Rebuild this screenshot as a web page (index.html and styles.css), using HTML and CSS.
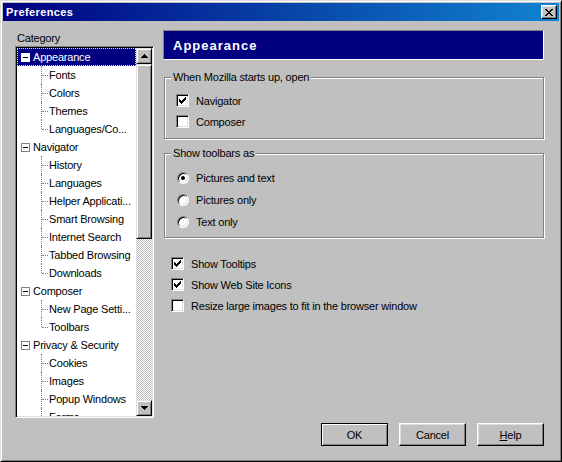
FILE: index.html
```html
<!DOCTYPE html>
<html lang="en">
<head>
	<meta charset="UTF-8">
	<title>Preferences</title>
	<link rel="stylesheet" href="styles.css">
</head>
<body>
	<div class="window">
		<div class="titlebar">
			<span class="title">Preferences</span>
			<button class="close" type="button">
				<svg width="8" height="7" viewBox="0 0 8 7"><path d="M0 0h2v1H0z M6 0h2v1H6z M1 1h2v1H1z M5 1h2v1H5z M2 2h4v1H2z M3 3h2v1H3z M2 4h4v1H2z M1 5h2v1H1z M5 5h2v1H5z M0 6h2v1H0z M6 6h2v1H6z" fill="#000"/></svg>
			</button>
		</div>
		<div class="content">
			<div class="cols">
				<div class="sidebar">
					<div class="cat-label">Category</div>
					<div class="tree">
						<ul class="tree-list">
							<li class="row node selected"><span class="twisty"></span>Appearance</li>
							<li class="row child">Fonts</li>
							<li class="row child">Colors</li>
							<li class="row child">Themes</li>
							<li class="row child last">Languages/Co...</li>
							<li class="row node"><span class="twisty"></span>Navigator</li>
							<li class="row child">History</li>
							<li class="row child">Languages</li>
							<li class="row child">Helper Applicati...</li>
							<li class="row child">Smart Browsing</li>
							<li class="row child">Internet Search</li>
							<li class="row child">Tabbed Browsing</li>
							<li class="row child last">Downloads</li>
							<li class="row node"><span class="twisty"></span>Composer</li>
							<li class="row child">New Page Setti...</li>
							<li class="row child last">Toolbars</li>
							<li class="row node"><span class="twisty"></span>Privacy &amp; Security</li>
							<li class="row child">Cookies</li>
							<li class="row child">Images</li>
							<li class="row child">Popup Windows</li>
							<li class="row child">Forms</li>
						</ul>
						<div class="scrollbar">
							<div class="sb-btn">
								<svg width="7" height="4" viewBox="0 0 7 4"><path d="M3 0h1v1h1v1h1v1h1v1H0V3h1V2h1V1h1z" fill="#000"/></svg>
							</div>
							<div class="sb-track">
								<div class="sb-thumb"></div>
							</div>
							<div class="sb-btn">
								<svg width="7" height="4" viewBox="0 0 7 4"><path d="M0 0h7v1H6v1H5v1H4v1H3V3H2V2H1V1H0z" fill="#000"/></svg>
							</div>
						</div>
					</div>
				</div>
				<div class="panel">
					<div class="panel-header">Appearance</div>

					<fieldset class="group group-start">
						<legend class="group-title">When Mozilla starts up, open</legend>
						<div class="check-row"><span class="checkbox checked"></span>Navigator</div>
						<div class="check-row"><span class="checkbox"></span>Composer</div>
					</fieldset>

					<fieldset class="group group-toolbars">
						<legend class="group-title">Show toolbars as</legend>
						<div class="radio-row"><span class="radio checked"></span>Pictures and text</div>
						<div class="radio-row"><span class="radio"></span>Pictures only</div>
						<div class="radio-row"><span class="radio"></span>Text only</div>
					</fieldset>

					<div class="options">
						<div class="check-row"><span class="checkbox checked"></span>Show Tooltips</div>
						<div class="check-row"><span class="checkbox checked"></span>Show Web Site Icons</div>
						<div class="check-row"><span class="checkbox"></span>Resize large images to fit in the browser window</div>
					</div>
				</div>
			</div>
			<div class="buttons">
				<button class="btn btn-default" type="button">OK</button>
				<button class="btn" type="button">Cancel</button>
				<button class="btn" type="button"><u>H</u>elp</button>
			</div>
		</div>
	</div>
</body>
</html>
```

FILE: styles.css
```css
body{
	margin: 0;
	background: #c0c0c0;
	font: 11px "Liberation Sans", Arial, sans-serif;
	letter-spacing: -0.2px;
	color: #000;
}
button{
	font: inherit;
	letter-spacing: inherit;
	color: #000;
}
.window{
	width: 562px;
	height: 462px;
	box-sizing: border-box;
	border: 1px solid;
	border-color: #dfdfdf #000 #000 #dfdfdf;
	box-shadow: inset 1px 1px #fff, inset -1px -1px #808080;
	padding: 2px;
	display: flex;
	flex-direction: column;
	background: #c0c0c0;
}

/* title bar */
.titlebar{
	height: 18px;
	display: flex;
	align-items: center;
	justify-content: space-between;
	padding: 0 2px 0 3px;
	background: linear-gradient(to right, #000080, #1084d0);
	color: #fff;
}
.title{
	font-weight: bold;
	letter-spacing: 0.4px;
}
.close{
	width: 16px;
	height: 14px;
	padding: 0;
	box-sizing: border-box;
	border: 1px solid;
	border-color: #fff #000 #000 #fff;
	box-shadow: inset -1px -1px #808080, inset 1px 1px #dfdfdf;
	background: #c0c0c0;
	display: flex;
	align-items: center;
	justify-content: center;
}

.content{
	flex: 1;
	padding: 9px 15px 0 12px;
	display: flex;
	flex-direction: column;
}
.cols{
	display: flex;
	gap: 9px;
}

/* category tree */
.sidebar{
	width: 139px;
}
.cat-label{
	height: 16px;
	line-height: 16px;
	padding-left: 2px;
}
.tree{
	width: 139px;
	height: 372px;
	box-sizing: border-box;
	border: 1px solid;
	border-color: #808080 #fff #fff #808080;
	box-shadow: inset 1px 1px #000, inset -1px -1px #dfdfdf;
	padding: 1px;
	display: flex;
	background: #fff;
}
.tree-list{
	flex: 1;
	margin: 0;
	padding: 0;
	list-style: none;
	overflow: hidden;
	background: #fff;
}
.row{
	height: 18px;
	display: flex;
	align-items: center;
	position: relative;
	white-space: nowrap;
}
.node{
	padding-left: 4px;
}
.twisty{
	width: 9px;
	height: 9px;
	box-sizing: border-box;
	border: 1px solid #808080;
	background: #fff;
	margin-right: 3px;
	display: flex;
	align-items: center;
	justify-content: center;
}
.twisty::before{
	content: "";
	width: 5px;
	height: 1px;
	background: #000;
}
.selected{
	background: #000080;
	color: #fff;
	outline: 1px dotted #dfdfdf;
	outline-offset: -1px;
}
.selected .twisty{
	border-color: #fff;
}
.child{
	padding-left: 32px;
}
.child::before{
	content: "";
	position: absolute;
	left: 24px;
	top: 0;
	bottom: 0;
	border-left: 1px dotted #808080;
}
.child.last::before{
	bottom: 9px;
}
.child::after{
	content: "";
	position: absolute;
	left: 25px;
	top: 9px;
	width: 6px;
	border-top: 1px dotted #808080;
}

/* scrollbar */
.scrollbar{
	width: 16px;
	display: flex;
	flex-direction: column;
}
.sb-btn, .sb-thumb{
	box-sizing: border-box;
	border: 1px solid;
	border-color: #dfdfdf #000 #000 #dfdfdf;
	box-shadow: inset 1px 1px #fff, inset -1px -1px #808080;
	background: #c0c0c0;
}
.sb-btn{
	height: 16px;
	display: flex;
	align-items: center;
	justify-content: center;
}
.sb-track{
	flex: 1;
	background-image: conic-gradient(#fff 25%, #c0c0c0 0 50%, #fff 0 75%, #c0c0c0 0);
	background-size: 2px 2px;
}
.sb-thumb{
	height: 175px;
}

/* right panel */
.panel{
	width: 381px;
	display: flex;
	flex-direction: column;
}
.panel-header{
	height: 30px;
	box-sizing: border-box;
	border: 1px solid;
	border-color: #808080 #fff #fff #808080;
	background: #000080;
	color: #fff;
	font-size: 13px;
	font-weight: bold;
	letter-spacing: 1px;
	padding-left: 9px;
	display: flex;
	align-items: center;
}
.group{
	margin: 0 0 0 1px;
	padding: 6px 0 6px 11px;
	border: 1px solid #808080;
	box-shadow: inset 1px 1px #fff, 1px 1px #fff;
	min-width: 0;
}
.group-start{
	margin-top: 11px;
}
.group-toolbars{
	margin-top: 8px;
	padding-top: 7px;
	padding-bottom: 4px;
}
.group-title{
	padding: 0 2px;
	margin-left: -5px;
	line-height: 13px;
	background: #c0c0c0;
}
.check-row{
	height: 21px;
	display: flex;
	align-items: center;
	gap: 7px;
	white-space: nowrap;
}
.radio-row{
	height: 22px;
	display: flex;
	align-items: center;
	gap: 7px;
	padding-left: 1px;
}
.checkbox{
	width: 13px;
	height: 13px;
	box-sizing: border-box;
	border: 1px solid;
	border-color: #808080 #fff #fff #808080;
	box-shadow: inset 1px 1px #000, inset -1px -1px #dfdfdf;
	background: #fff;
	position: relative;
}
.checkbox.checked::after{
	content: "";
	position: absolute;
	left: 2px;
	top: 2px;
	width: 7px;
	height: 7px;
	background: url("data:image/svg+xml,%3Csvg xmlns='http://www.w3.org/2000/svg' width='7' height='7'%3E%3Cpath d='M6 0h1v1H6z M5 1h2v1H5z M0 2h1v1H0z M4 2h3v1H4z M0 3h2v1H0z M3 3h3v1H3z M0 4h5v1H0z M1 5h3v1H1z M2 6h1v1H2z'/%3E%3C/svg%3E") no-repeat;
}
.radio{
	width: 12px;
	height: 12px;
	box-sizing: border-box;
	border-radius: 50%;
	border: 1px solid;
	border-color: #808080 #fff #fff #808080;
	box-shadow: inset 1px 1px #000, inset -1px -1px #dfdfdf;
	background: #fff;
	display: flex;
	align-items: center;
	justify-content: center;
}
.radio.checked::after{
	content: "";
	width: 4px;
	height: 4px;
	border-radius: 50%;
	background: #000;
}
.options{
	margin: 15px 0 0 8px;
}

/* dialog buttons */
.buttons{
	display: flex;
	justify-content: flex-end;
	gap: 11px;
	margin-top: 5px;
}
.btn{
	width: 67px;
	height: 23px;
	padding: 0;
	box-sizing: border-box;
	border: 1px solid;
	border-color: #fff #000 #000 #fff;
	box-shadow: inset -1px -1px #808080, inset 1px 1px #dfdfdf;
	background: #c0c0c0;
}
.btn-default{
	border-color: #000;
	box-shadow: inset 1px 1px #fff, inset -1px -1px #808080;
}
```
